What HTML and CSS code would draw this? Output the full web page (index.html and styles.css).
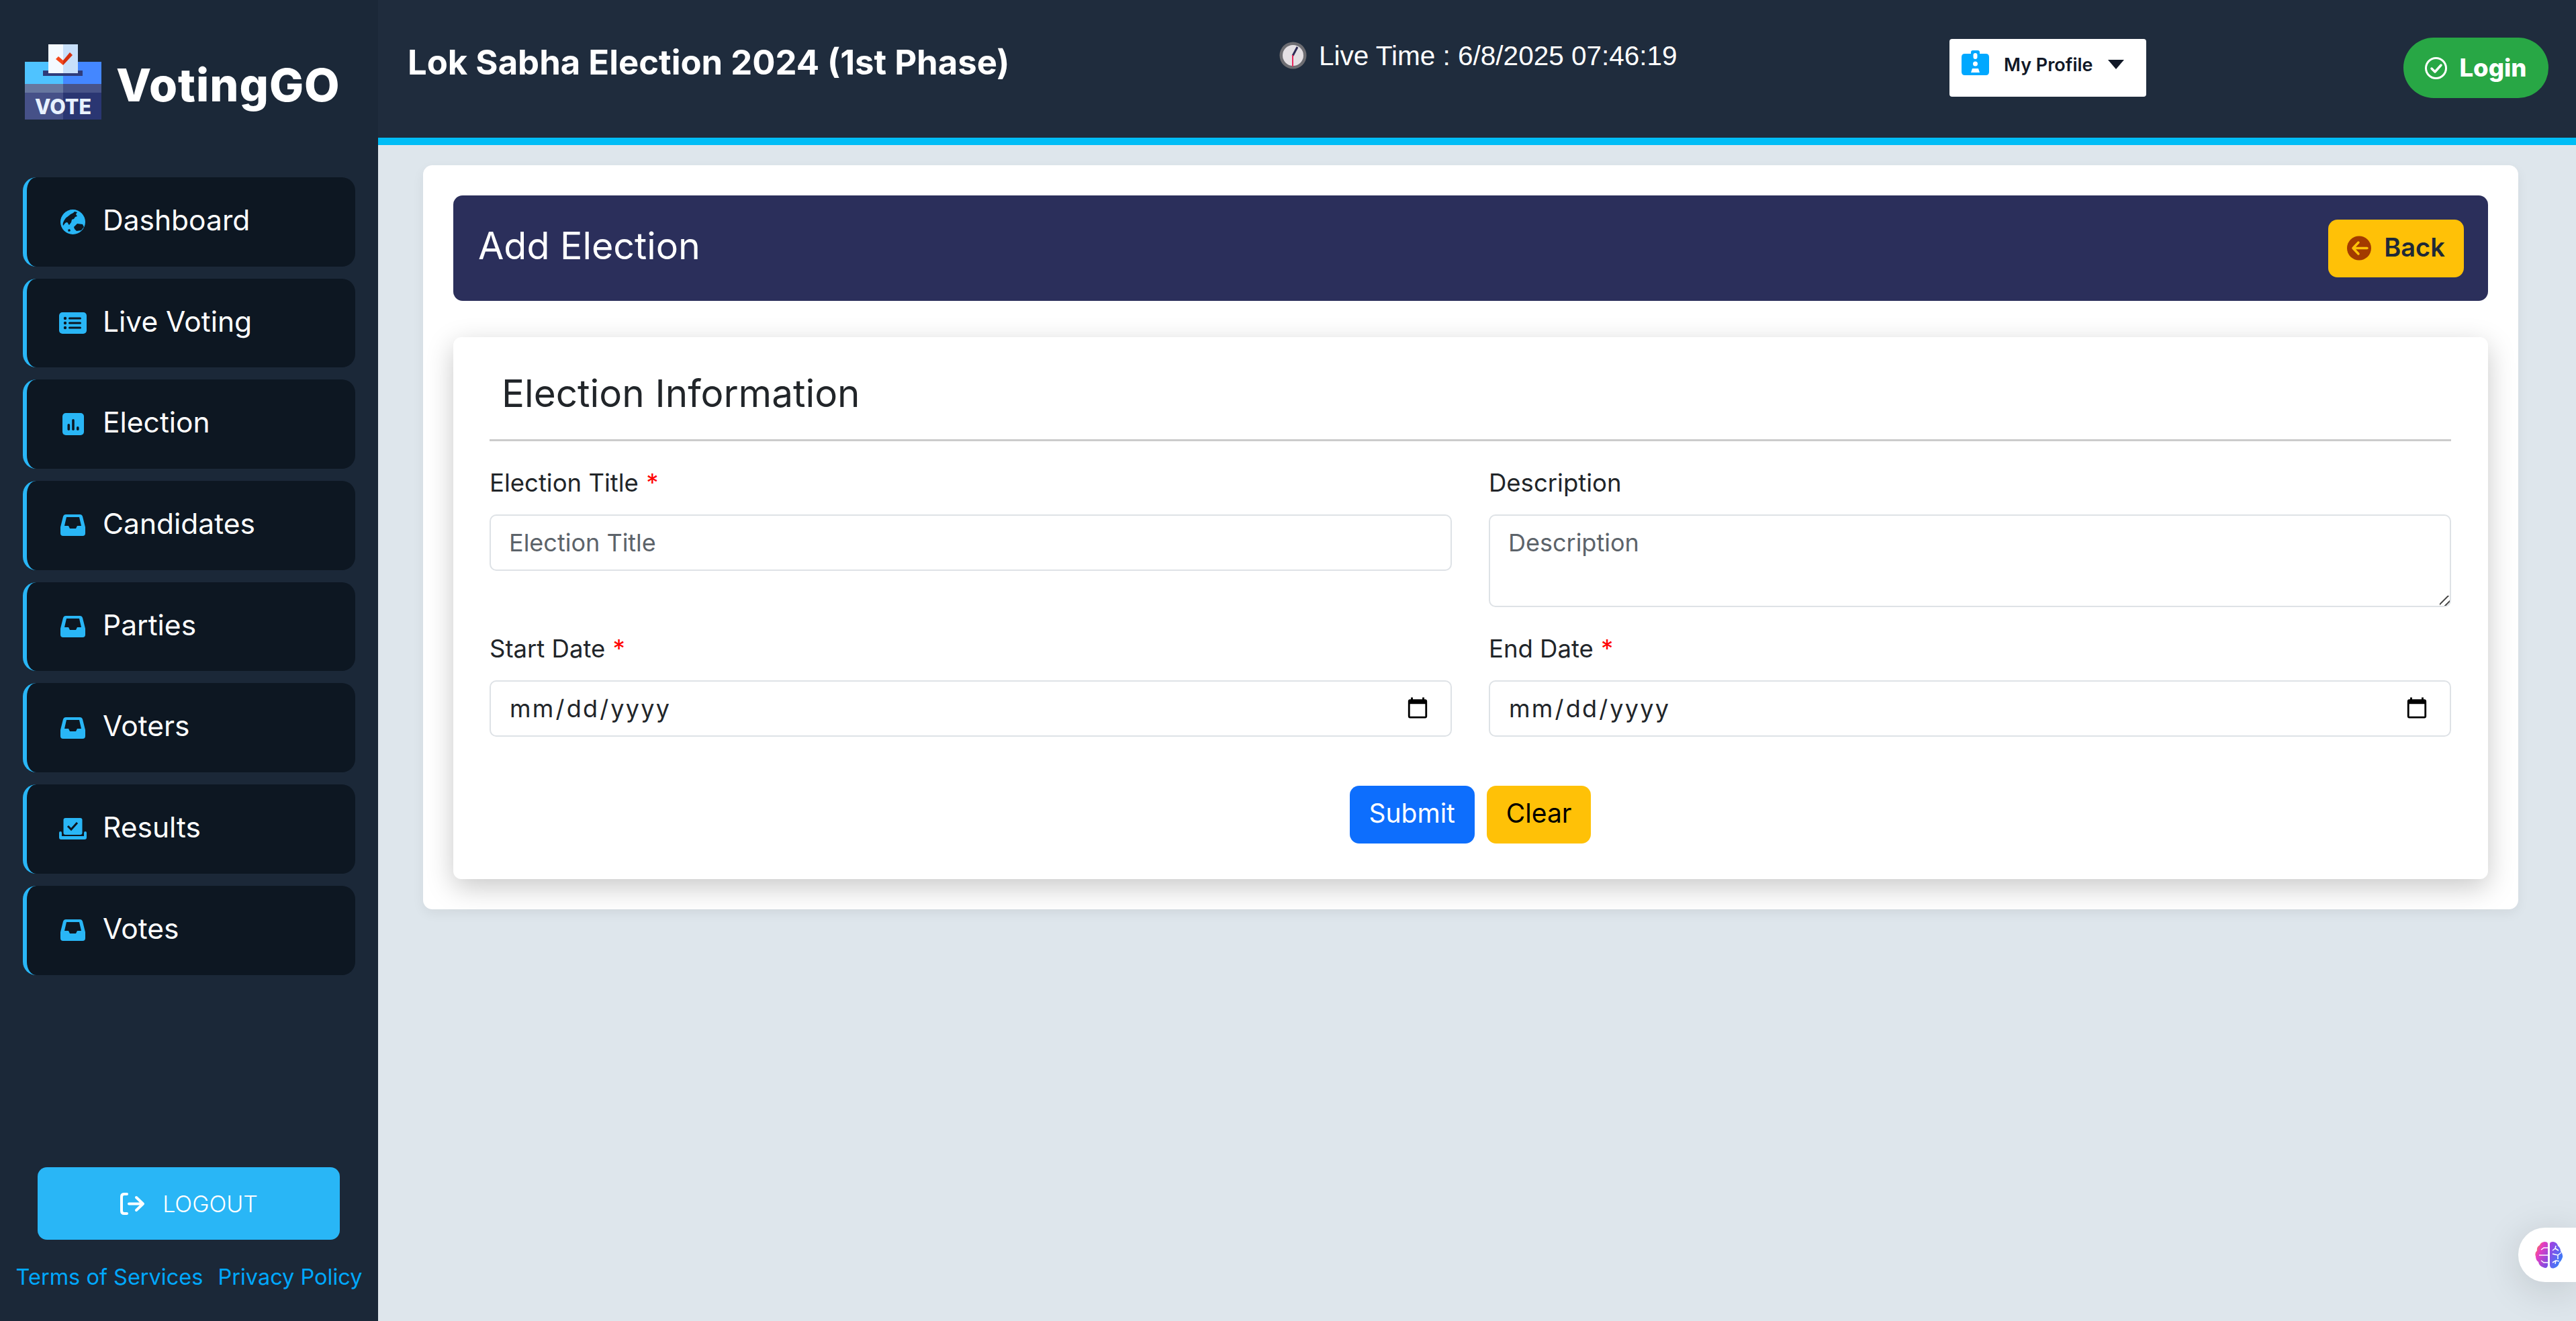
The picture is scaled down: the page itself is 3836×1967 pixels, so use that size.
FILE: index.html
```html
<!DOCTYPE html>
<html lang="en">
<head>
    <meta charset="UTF-8">
    <title>Add Election</title>
    <link rel="stylesheet" href="styles.css">
</head>
<body>
    <aside class="sidebar">
        <div class="brand">
            <svg class="brand-logo" viewBox="0 0 114 112">
                <rect x="0" y="26" width="57" height="34" fill="#4fc3ff"/>
                <rect x="57" y="26" width="57" height="34" fill="#4487ff"/>
                <rect x="0" y="59" width="57" height="14" fill="#67779f"/>
                <rect x="57" y="59" width="57" height="14" fill="#485488"/>
                <rect x="0" y="72" width="57" height="40" fill="#465188"/>
                <rect x="57" y="72" width="57" height="40" fill="#2a3672"/>
                <rect x="27" y="39" width="59" height="8" fill="#2f3c7a"/>
                <rect x="35" y="0" width="22" height="43" fill="#f4faff"/>
                <rect x="57" y="0" width="22" height="43" fill="#c8e0fa"/>
                <path d="M46 22l4-4 7 6V31z" fill="#f4481c"/>
                <path d="M57 24l10-12 4 4-14 15z" fill="#d5300f"/>
                <text class="logo-text" x="15" y="104" textLength="84" lengthAdjust="spacingAndGlyphs">VOTE</text>
            </svg>
            <span class="brand-name">VotingGO</span>
        </div>

        <nav class="menu">
            <a class="menu-item">
                <span class="menu-icon">
                    <svg width="37" height="37" viewBox="0 0 37 37">
                        <circle cx="18.5" cy="18.5" r="18.5" fill="#29b6f6"/>
                        <path d="M21 3c-2 3-5 3-7 5s-5 3-7 6c-2 3-4 6-3 10 2-2 3-5 6-5 2 1 1 3 3 4l3-4 1-4 3-1 2-3 3-1-2-3 2-3z" fill="#0d1722"/>
                        <path d="M20 26l5-5 8 1 2 4-4 5-7 1-3-3z" fill="#0d1722"/>
                        <path d="M11 30l3-1 1 3-3 1z" fill="#0d1722"/>
                    </svg>
                </span>
                <span class="menu-label">Dashboard</span>
            </a>
            <a class="menu-item">
                <span class="menu-icon">
                    <svg width="41" height="32" viewBox="0 0 41 32">
                        <rect width="41" height="32" rx="5" fill="#29b6f6"/>
                        <circle cx="9" cy="9" r="2.2" fill="#0d1722"/>
                        <circle cx="9" cy="16" r="2.2" fill="#0d1722"/>
                        <circle cx="9" cy="23" r="2.2" fill="#0d1722"/>
                        <rect x="14" y="7.5" width="19" height="3" rx="1.5" fill="#0d1722"/>
                        <rect x="14" y="14.5" width="19" height="3" rx="1.5" fill="#0d1722"/>
                        <rect x="14" y="21.5" width="19" height="3" rx="1.5" fill="#0d1722"/>
                    </svg>
                </span>
                <span class="menu-label">Live Voting</span>
            </a>
            <a class="menu-item">
                <span class="menu-icon">
                    <svg width="32" height="33" viewBox="0 0 32 33">
                        <rect width="32" height="33" rx="5" fill="#29b6f6"/>
                        <rect x="7.5" y="16" width="3.6" height="10" rx="1.8" fill="#0d1722"/>
                        <rect x="14.2" y="9" width="3.6" height="17" rx="1.8" fill="#0d1722"/>
                        <rect x="21" y="20" width="3.6" height="6" rx="1.8" fill="#0d1722"/>
                    </svg>
                </span>
                <span class="menu-label">Election</span>
            </a>
            <a class="menu-item">
                <span class="menu-icon">
                    <svg width="37" height="32" viewBox="0 0 37 32"><path class="tray" fill-rule="evenodd" d="M8 0H29Q32 0 33 3L37 19V28Q37 32 33 32H4Q0 32 0 28V19L4 3Q5 0 8 0ZM9 4H28L31 17H25L23 21H14L12 17H6Z"/></svg>
                </span>
                <span class="menu-label">Candidates</span>
            </a>
            <a class="menu-item">
                <span class="menu-icon">
                    <svg width="37" height="32" viewBox="0 0 37 32"><path class="tray" fill-rule="evenodd" d="M8 0H29Q32 0 33 3L37 19V28Q37 32 33 32H4Q0 32 0 28V19L4 3Q5 0 8 0ZM9 4H28L31 17H25L23 21H14L12 17H6Z"/></svg>
                </span>
                <span class="menu-label">Parties</span>
            </a>
            <a class="menu-item">
                <span class="menu-icon">
                    <svg width="37" height="32" viewBox="0 0 37 32"><path class="tray" fill-rule="evenodd" d="M8 0H29Q32 0 33 3L37 19V28Q37 32 33 32H4Q0 32 0 28V19L4 3Q5 0 8 0ZM9 4H28L31 17H25L23 21H14L12 17H6Z"/></svg>
                </span>
                <span class="menu-label">Voters</span>
            </a>
            <a class="menu-item">
                <span class="menu-icon">
                    <svg width="41" height="32" viewBox="0 0 41 32">
                        <path class="tray" d="M0 22a2 2 0 0 1 4 0v5h33v-5a2 2 0 0 1 4 0v7q0 3-3 3H3q-3 0-3-3z"/>
                        <rect class="tray" x="6.500" y="0" width="28" height="25" rx="3"/>
                        <path d="M13 12l5 5 9-10" fill="none" stroke="#0d1722" stroke-width="3"/>
                    </svg>
                </span>
                <span class="menu-label">Results</span>
            </a>
            <a class="menu-item">
                <span class="menu-icon">
                    <svg width="37" height="32" viewBox="0 0 37 32"><path class="tray" fill-rule="evenodd" d="M8 0H29Q32 0 33 3L37 19V28Q37 32 33 32H4Q0 32 0 28V19L4 3Q5 0 8 0ZM9 4H28L31 17H25L23 21H14L12 17H6Z"/></svg>
                </span>
                <span class="menu-label">Votes</span>
            </a>
        </nav>

        <div class="side-foot">
            <a class="logout">
                <svg width="38" height="33" viewBox="0 0 38 33" fill="none" stroke="#fff" stroke-width="4" stroke-linecap="round" stroke-linejoin="round">
                    <path d="M11 2H7Q3 2 3 6V27Q3 31 7 31H11"/>
                    <path d="M14 16.500H34M25 7l10 9.500-10 9.500"/>
                </svg>
                LOGOUT
            </a>
            <div class="side-links">
                <a>Terms of Services</a>
                <a>Privacy Policy</a>
            </div>
        </div>
    </aside>

    <div class="content">
        <header class="topbar">
            <h1 class="page-title">Lok Sabha Election 2024 (1st Phase)</h1>
            <div class="live-time">
                <svg width="41" height="41" viewBox="0 0 41 41">
                    <circle cx="20.500" cy="20.500" r="20" fill="#6d6d72"/>
                    <circle cx="20.500" cy="20.500" r="15.500" fill="#e4e0e4"/>
                    <path d="M20 21L27 8" stroke="#2d2b55" stroke-width="3"/>
                    <path d="M20 20V37" stroke="#e8285e" stroke-width="2"/>
                </svg>
                <span class="live-text">Live Time : 6/8/2025 07:46:19</span>
            </div>
            <button class="profile-btn">
                <svg width="41" height="37" viewBox="0 0 41 37">
                    <path d="M5 5H14V2a3 3 0 0 1 3-2h7a3 3 0 0 1 3 2V5H36q5 0 5 5V32q0 5-5 5H5q-5 0-5-5V10q0-5 5-5z" fill="#00a8ff"/>
                    <rect x="17.500" y="4" width="6" height="9" rx="3" fill="#fff"/>
                    <circle cx="20.500" cy="20" r="3.500" fill="#fff"/>
                    <path d="M16 27H25L27 33H14z" fill="#fff"/>
                </svg>
                <span>My Profile</span>
                <i class="caret"></i>
            </button>
            <button class="login-btn">
                <svg width="33" height="33" viewBox="0 0 33 33" fill="none" stroke="#fff" stroke-linecap="round" stroke-linejoin="round">
                    <circle cx="16.500" cy="16.500" r="15" stroke-width="3"/>
                    <path d="M10 17l5 5 9-10" stroke-width="3.500"/>
                </svg>
                Login
            </button>
        </header>

        <main class="page">
            <section class="panel">
                <div class="panel-head">
                    <h2>Add Election</h2>
                    <button class="back-btn">
                        <svg width="36" height="37" viewBox="0 0 36 37" fill="none">
                            <circle cx="18" cy="18.500" r="18" fill="#a33b00"/>
                            <path d="M30 18.500H9M17 10l-8 8.500 8 8.500" stroke="#ffc107" stroke-width="3.500" stroke-linecap="round" stroke-linejoin="round"/>
                        </svg>
                        <span class="back-label">Back</span>
                    </button>
                </div>

                <form class="form-card">
                    <h3>Election Information</h3>
                    <div class="form-grid">
                        <div class="field">
                            <label>Election Title <b>*</b></label>
                            <input class="control" type="text" placeholder="Election Title">
                        </div>
                        <div class="field">
                            <label>Description</label>
                            <textarea class="control area" placeholder="Description"></textarea>
                        </div>
                        <div class="field">
                            <label>Start Date <b>*</b></label>
                            <input class="control date" type="date">
                        </div>
                        <div class="field">
                            <label>End Date <b>*</b></label>
                            <input class="control date" type="date">
                        </div>
                    </div>
                    <div class="form-actions">
                        <button type="button" class="submit-btn">Submit</button>
                        <button type="button" class="clear-btn">Clear</button>
                    </div>
                </form>
            </section>
        </main>
    </div>

    <div class="brain-tab">
        <svg width="43" height="40" viewBox="0 0 43 40">
            <defs>
                <linearGradient id="brainL" x1="0" y1="0" x2="1" y2="1">
                    <stop offset="0" stop-color="#ff9a1a"/>
                    <stop offset="0.35" stop-color="#e83cc0"/>
                    <stop offset="1" stop-color="#6a4fe8"/>
                </linearGradient>
                <linearGradient id="brainR" x1="0" y1="0" x2="1" y2="1">
                    <stop offset="0" stop-color="#a83ce0"/>
                    <stop offset="1" stop-color="#1f8cff"/>
                </linearGradient>
            </defs>
            <path d="M20 3Q20 0 15 0 9 1 8 5 3 8 4 13 0 17 2 22 2 27 6 30 7 36 13 38 19 41 20 35Z" fill="url(#brainL)"/>
            <path d="M23 3Q23 0 28 0 34 1 35 6 39 9 39 14 43 18 42 23 40 29 37 31 36 37 30 39 24 41 23 35Z" fill="url(#brainR)"/>
            <path d="M20 9H14L10 12M20 20H7M20 31H14L10 28" fill="none" stroke="#fff" stroke-width="1.500"/>
            <path d="M27 13l4-3 1-4M31 10l5 3M27 18l8 2 5-4M35 20v6M27 31l5-3 5 1M32 28l-1 5" fill="none" stroke="#fff" stroke-width="1.500"/>
        </svg>
    </div>
</body>
</html>
```

FILE: styles.css
```css
* {
    box-sizing: border-box;
}
body {
    margin: 0;
    height: 1967px;
    display: flex;
    overflow: hidden;
    background: #dee6ec;
    font-family: "Inter", "Open Sans", sans-serif;
    color: #212529;
}
button {
    font-family: inherit;
    border: none;
    cursor: pointer;
}

/* sidebar */
.sidebar {
    width: 563px;
    flex-shrink: 0;
    display: flex;
    flex-direction: column;
    padding: 66px 0 0 34px;
    background: #1b2838;
}
.brand {
    display: flex;
    align-items: flex-start;
    gap: 22px;
    height: 198px;
    padding-left: 3px;
}
.brand-logo {
    width: 114px;
    height: 112px;
}
.logo-text {
    font-family: "Inter", sans-serif;
    font-size: 31px;
    font-weight: 800;
    fill: #e8f1ff;
}
.brand-name {
    margin-top: 18px;
    font-size: 68px;
    line-height: 84px;
    font-weight: 800;
    letter-spacing: 1px;
    color: #fff;
}
.menu {
    display: flex;
    flex-direction: column;
    gap: 18px;
    width: 495px;
}
.menu-item {
    height: 132.700px;
    display: flex;
    align-items: center;
    gap: 24px;
    padding-left: 48px;
    border-left: 6px solid #29b6f6;
    border-radius: 20px;
    background: #0d1722;
    color: #fff;
    font-size: 42.500px;
}
.menu-icon {
    width: 41px;
    display: flex;
    justify-content: center;
}
.menu-label {
    margin-bottom: 6px;
}
.tray {
    fill: #29b6f6;
}
.side-foot {
    margin-top: auto;
    margin-left: -34px;
    padding-bottom: 46px;
}
.logout {
    margin: 0 57px 0 56px;
    height: 108px;
    display: flex;
    align-items: center;
    justify-content: center;
    gap: 26px;
    border-radius: 14px;
    background: #29b6f6;
    color: #fff;
    font-size: 34px;
    font-weight: 300;
}
.side-links {
    display: flex;
    justify-content: center;
    gap: 22px;
    margin-top: 36px;
    color: #00a8ff;
    font-size: 32.500px;
}

/* top bar */
.content {
    flex: 1;
    min-width: 0;
}
.topbar {
    height: 216px;
    display: grid;
    grid-template-columns: 1298px 998px 676px auto;
    align-items: start;
    padding-left: 44px;
    background: #1f2c3d;
    border-bottom: 11px solid #00bdf6;
}
.page-title {
    margin: 58px 0 0;
    font-size: 50.800px;
    line-height: 70px;
    font-weight: 700;
    color: #fff;
}
.live-time {
    margin-top: 58px;
    display: flex;
    align-items: center;
    gap: 18px;
    height: 48px;
    font-family: "Liberation Sans", Arial, sans-serif;
    font-size: 40.500px;
    color: #fff;
}
.live-text {
    margin-top: 3px;
}
.profile-btn {
    margin-top: 58px;
    width: 293px;
    height: 86px;
    display: flex;
    align-items: flex-start;
    gap: 22px;
    padding: 17px 0 0 18px;
    border-radius: 4px;
    background: #fff;
    color: #111827;
    font-size: 27px;
    font-weight: 600;
}
.profile-btn span {
    line-height: 44px;
}
.caret {
    margin-top: 14px;
    border-left: 12px solid transparent;
    border-right: 12px solid transparent;
    border-top: 14px solid #111827;
}
.login-btn {
    margin-top: 56px;
    width: 216px;
    height: 90px;
    display: flex;
    align-items: center;
    justify-content: center;
    gap: 18px;
    border-radius: 45px;
    background: #28a745;
    color: #fff;
    font-size: 36.500px;
    font-weight: 800;
}

/* main area */
.page {
    padding: 30px 86px 0 67px;
}
.panel {
    padding: 45px;
    border-radius: 14px;
    background: #fff;
    box-shadow: 0 6px 18px rgba(0, 0, 0, 0.06);
}
.panel-head {
    height: 157px;
    display: flex;
    align-items: center;
    justify-content: space-between;
    padding: 0 36px 0 37px;
    border-radius: 14px;
    background: #2b2f5b;
    color: #fff;
}
.panel-head h2 {
    margin: 0 0 8px;
    font-size: 55.600px;
    font-weight: 400;
}
.back-btn {
    width: 202px;
    height: 86px;
    display: flex;
    align-items: center;
    justify-content: center;
    gap: 19px;
    border-radius: 14px;
    background: #ffc107;
    color: #1f2937;
    font-size: 38px;
    font-weight: 600;
}
.back-label {
    margin-bottom: 3px;
}
.form-card {
    margin-top: 54px;
    padding: 0 55px 53px 54px;
    border-radius: 12px;
    background: #fff;
    box-shadow: 0 12px 40px rgba(0, 0, 0, 0.22);
}
.form-card h3 {
    margin: 0;
    height: 155px;
    padding: 51px 0 0 18px;
    border-bottom: 3px solid #cbcbcb;
    font-size: 56.600px;
    line-height: 66px;
    font-weight: 400;
}
.form-grid {
    display: grid;
    grid-template-columns: 1fr 1fr;
    column-gap: 55px;
    row-gap: 35px;
    margin-top: 35px;
}
.field label {
    display: block;
    height: 54px;
    margin-bottom: 20px;
    font-size: 36.500px;
    line-height: 54px;
}
.field b {
    margin-left: 1px;
    color: #ff0000;
    font-weight: 400;
}
.control {
    display: block;
    width: 100%;
    height: 84px;
    padding: 0 27px;
    border: 2px solid #dee2e6;
    border-radius: 10px;
    background: #fff;
    font-family: inherit;
    font-size: 36px;
    color: #212529;
    outline: none;
}
.control::placeholder {
    color: #5c636a;
}
.area {
    height: 138px;
    padding-top: 18px;
}
.area::-webkit-resizer {
    background: linear-gradient(135deg, transparent 40%, #555 40%, #555 50%, transparent 50%, transparent 72%, #555 72%, #555 82%, transparent 82%);
}
.date {
    padding-right: 29px;
    letter-spacing: 2.200px;
}
.form-actions {
    display: flex;
    justify-content: center;
    gap: 18px;
    margin-top: 73px;
}
.form-actions button {
    height: 86px;
    padding: 0 29px 5px;
    border-radius: 14px;
    font-size: 39px;
}
.submit-btn {
    background: #0d6efd;
    color: #fff;
}
.clear-btn {
    background: #ffc107;
    color: #000;
}

/* floating tab */
.brain-tab {
    position: fixed;
    right: 0;
    top: 1828px;
    width: 86px;
    height: 81px;
    display: flex;
    align-items: center;
    padding-left: 24px;
    border-radius: 40px 0 0 40px;
    background: #fff;
    box-shadow: 0 10px 60px rgba(0, 0, 0, 0.14);
}
```
